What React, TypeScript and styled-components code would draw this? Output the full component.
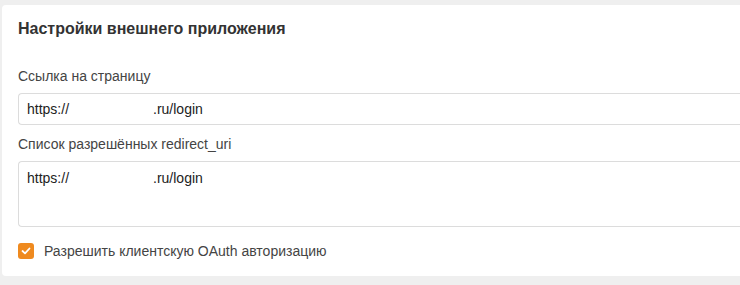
import React from 'react';
import styled, { createGlobalStyle } from 'styled-components';

const GlobalStyle = createGlobalStyle`
  html, body {
    margin: 0;
    padding: 0;
    background: #efefef;
    overflow: hidden;
    font-family: 'Liberation Sans', Arial, sans-serif;
  }
`;

const Page = styled.div`
  padding: 5px 0 0 2px;
  height: 285px;
  box-sizing: border-box;
`;

// card continues past the right edge of the frame, so no right corners
const Card = styled.section`
  background: #fff;
  border-radius: 4px 0 0 4px;
  padding: 14px 0 17px 16px;
  box-sizing: border-box;
`;

const Title = styled.h2`
  margin: 0 0 27px;
  font-size: 16px;
  line-height: 20px;
  font-weight: bold;
  color: #333;
`;

const Label = styled.div`
  font-size: 14px;
  line-height: 20px;
  color: #444;
  margin-bottom: 7px;
`;

const Field = styled.div<{ $tall?: boolean }>`
  border: 1px solid #dcdcdc;
  border-right: none;
  border-radius: 4px 0 0 4px;
  height: ${({ $tall }) => ($tall ? '66px' : '32px')};
  box-sizing: border-box;
  padding: ${({ $tall }) => ($tall ? '7px 8px' : '0 8px')};
  display: flex;
  align-items: ${({ $tall }) => ($tall ? 'flex-start' : 'center')};
  font-size: 14px;
  line-height: 18px;
  color: #222;
  margin-bottom: 9px;
`;

const Hidden = styled.span`
  display: inline-block;
  width: 84px;
`;

const CheckRow = styled.label`
  display: flex;
  align-items: center;
  gap: 10px;
  margin-top: 16px;
  font-size: 14px;
  color: #444;
`;

const Box = styled.span`
  width: 16px;
  height: 16px;
  border-radius: 3px;
  background: #ef8a1f;
  display: inline-flex;
  align-items: center;
  justify-content: center;
`;

const Url = () => (
  <>
    <span>https://</span>
    <Hidden />
    <span>.ru/login</span>
  </>
);

export default function App() {
  return (
    <>
      <GlobalStyle />
      <Page>
        <Card>
          <Title>Настройки внешнего приложения</Title>
          <Label>Ссылка на страницу</Label>
          <Field>
            <Url />
          </Field>
          <Label>Список разрешённых redirect_uri</Label>
          <Field $tall>
            <Url />
          </Field>
          <CheckRow>
            <Box>
              <svg width="10" height="8" viewBox="0 0 10 8">
                <path d="M1.5 4 L4 6.3 L8.5 1.5" stroke="#fff" strokeWidth="1.8" fill="none" strokeLinecap="round" strokeLinejoin="round" />
              </svg>
            </Box>
            Разрешить клиентскую OAuth авторизацию
          </CheckRow>
        </Card>
      </Page>
    </>
  );
}
